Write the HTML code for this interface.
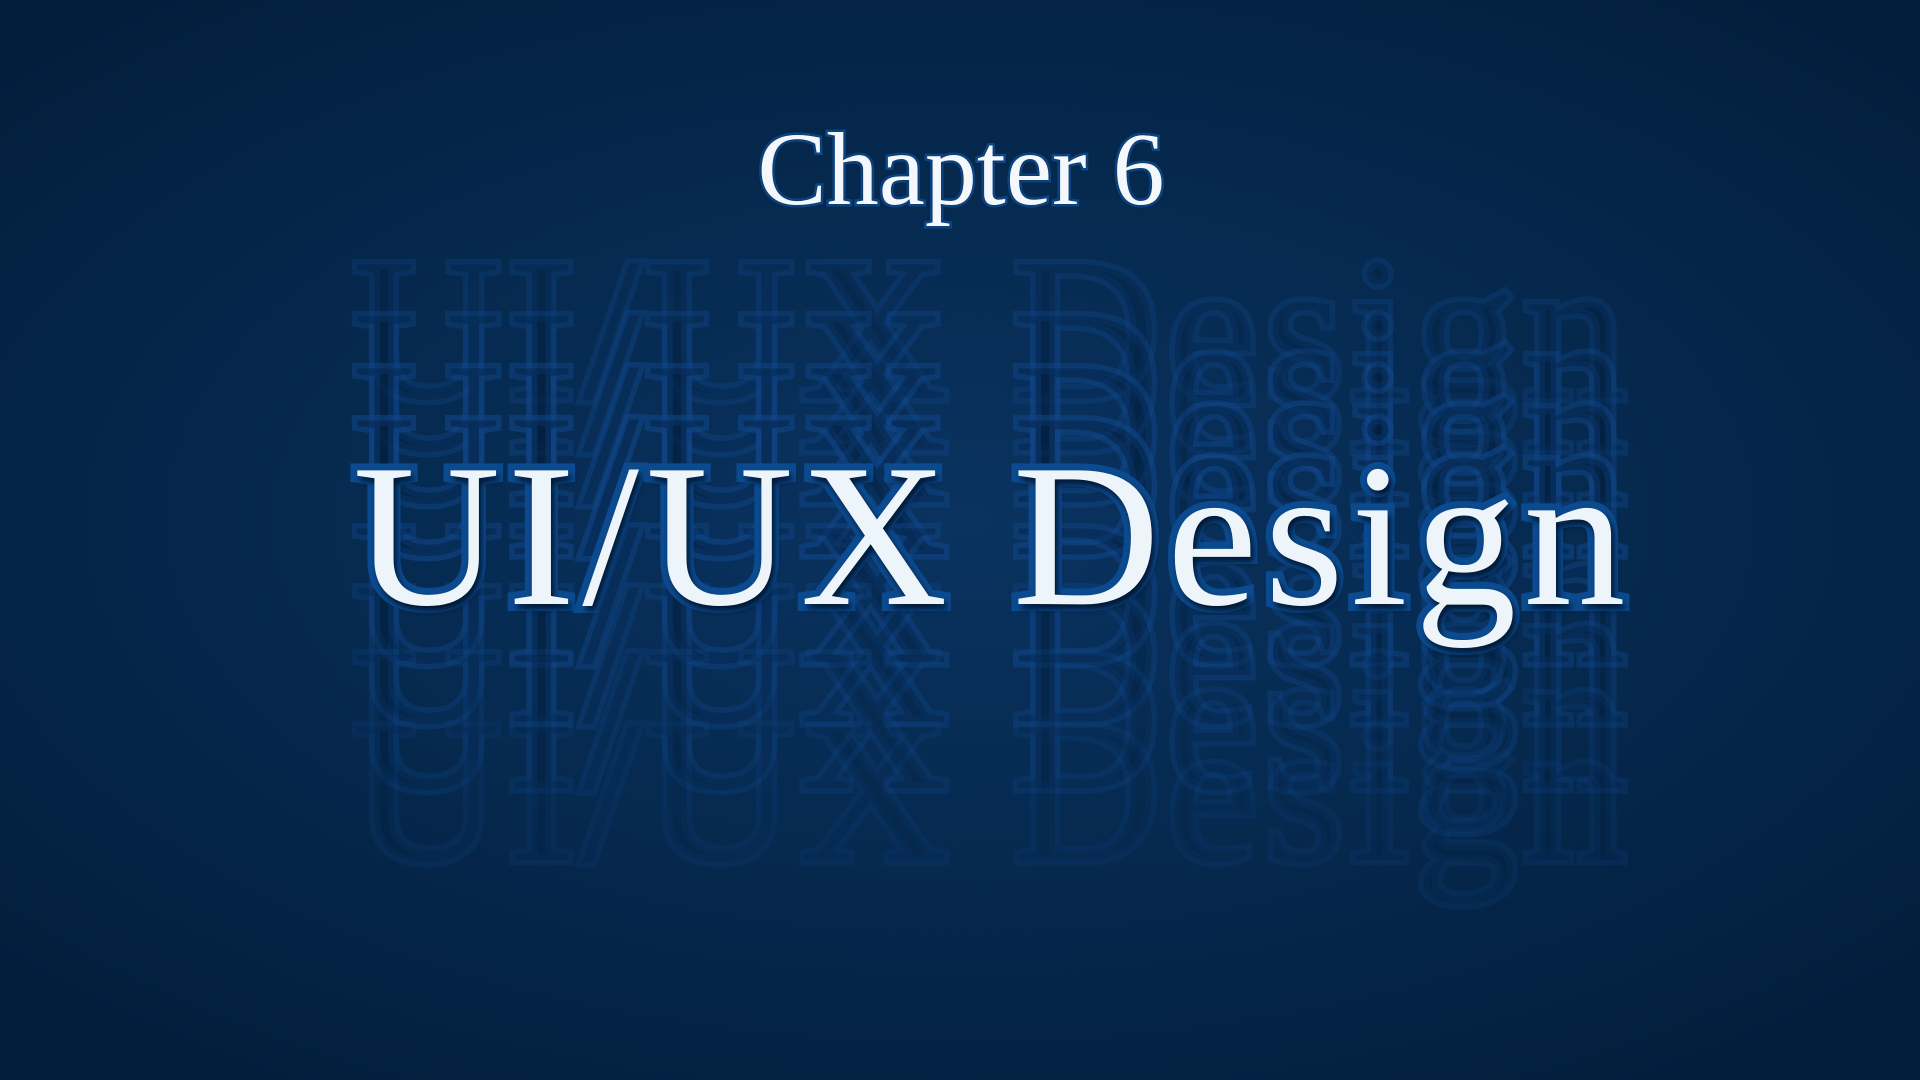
<!DOCTYPE html>
<html><head><meta charset="utf-8"><style>
html,body{margin:0;padding:0;width:1920px;height:1080px;overflow:hidden}
body{background:radial-gradient(ellipse 70% 65% at 50% 48%,#0a3360 0%,#062a50 45%,#021d3b 100%);position:relative;font-family:"Liberation Serif",serif}
.ch{position:absolute;left:0;width:1922px;top:118px;text-align:center;font-size:104px;line-height:104px;color:#f4f8fc;-webkit-text-stroke:5px #0d4a8c;paint-order:stroke fill;text-shadow:0 0 4px #0a2d55}
.t{position:absolute;left:353px;width:1300px;white-space:nowrap;font-size:204px;line-height:204px;letter-spacing:7px}
.o{color:rgba(3,28,58,0.45);-webkit-text-stroke:11px rgba(16,72,140,0.6);paint-order:stroke fill}
.m{color:#eef5fa;-webkit-text-stroke:14px #0b4a8e;paint-order:stroke fill;text-shadow:3px 5px 6px rgba(0,15,35,0.85)}
</style></head><body>
<div class="ch">Chapter 6</div>
<div class="t o" style="top:228px;opacity:.5">UI/UX Design</div>
<div class="t o" style="top:280px;opacity:.6">UI/UX Design</div>
<div class="t o" style="top:332px;opacity:.75">UI/UX Design</div>
<div class="t o" style="top:384px;opacity:.9">UI/UX Design</div>
<div class="t o" style="top:492px;opacity:.7">UI/UX Design</div>
<div class="t o" style="top:552px;opacity:.55">UI/UX Design</div>
<div class="t o" style="top:618px;opacity:.42">UI/UX Design</div>
<div class="t o" style="top:690px;opacity:.3">UI/UX Design</div>
<div class="t m" style="top:434px">UI/UX Design</div>
</body></html>
